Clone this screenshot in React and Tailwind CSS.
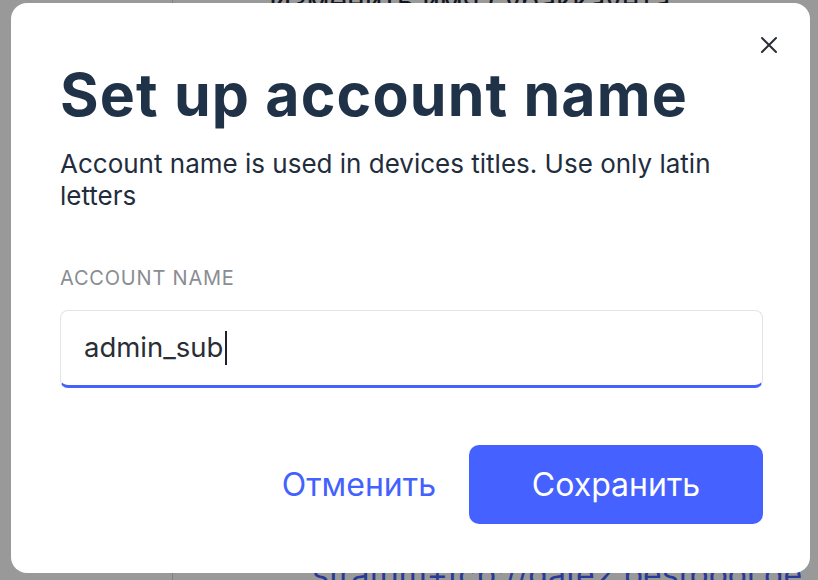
export default function App() {
  return (
    <div className="relative w-[818px] h-[580px] overflow-hidden bg-white" style={{ fontFamily: "Inter, 'Noto Sans', sans-serif" }}>
      {/* background page */}
      <div className="flex h-full">
        <div className="w-[173px] border-r border-gray-300"></div>
        <div className="flex-1 flex flex-col justify-between pl-[96px] pr-0">
          <div className="text-[30px] text-[#1f2937] leading-none -mt-[14px] whitespace-nowrap">Изменить имя субаккаунта</div>
          <div className="ml-[43px] text-[32px] text-[#4361ff] leading-none -mb-[11px] whitespace-nowrap">stratum+tcp://gate2.bestpool.de</div>
        </div>
      </div>
      {/* overlay */}
      <div className="absolute inset-0 bg-black/40"></div>
      {/* modal */}
      <div className="absolute left-[11px] top-[3px] w-[799px] h-[570px] bg-white rounded-[16px] pl-[49px] pr-[47px] pt-[56px]">
        <button className="absolute right-[32px] top-[33px] w-[18px] h-[18px] text-[#2b2f36]">
          <svg viewBox="0 0 18 18" className="w-[18px] h-[18px]" fill="none" stroke="currentColor" strokeWidth="2" strokeLinecap="round">
            <path d="M2 2L16 16M16 2L2 16" />
          </svg>
        </button>
        <h1 className="text-[59px] font-bold leading-[72px] text-[#1f3247] tracking-[1.15px] whitespace-nowrap">Set up account name</h1>
        <p className="mt-[17px] text-[26px] leading-[32px] text-[#1f2d3d] pr-[20px]">Account name is used in devices titles. Use only latin letters</p>
        <div className="mt-[54px] text-[20px] leading-[24px] text-[#8a8d93] uppercase tracking-[0.8px]">Account name</div>
        <div className="mt-[20px] h-[78px] rounded-[8px] border border-[#e3e4ea] border-b-[3px] border-b-[#4361ff] flex items-center px-[23px]">
          <span className="text-[27.5px] text-[#2a2e35]">admin_sub</span>
          <span className="ml-[2px] w-[2px] h-[34px] bg-[#1f2328]"></span>
        </div>
        <div className="mt-[57px] flex justify-end items-center gap-[33px]">
          <button className="text-[32px] text-[#4361ff]">Отменить</button>
          <button className="w-[294px] h-[79px] rounded-[10px] bg-[#4561ff] text-white text-[32px]">Сохранить</button>
        </div>
      </div>
    </div>
  );
}
